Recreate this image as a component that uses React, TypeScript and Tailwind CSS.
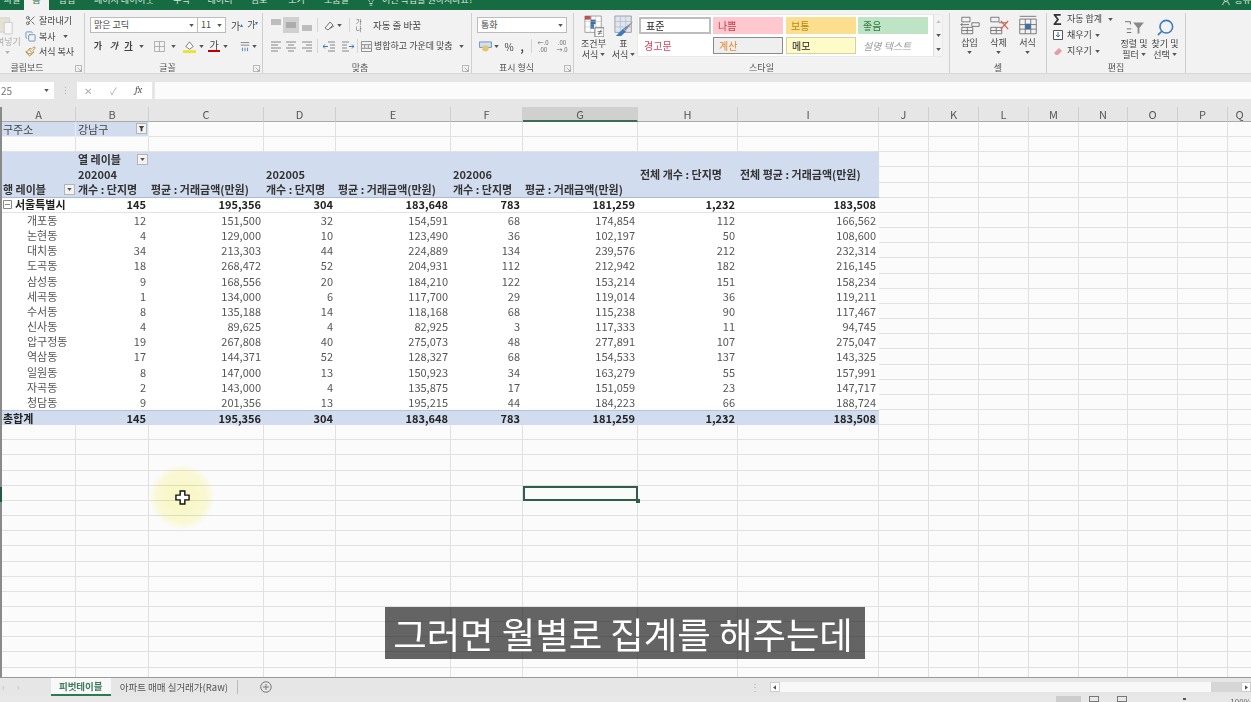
import type { ReactNode } from 'react';
import { Scissors, Copy, Paintbrush, Search, Lightbulb, UserRound } from 'lucide-react';

const COLUMNS = ['A', 'B', 'C', 'D', 'E', 'F', 'G', 'H', 'I', 'J', 'K', 'L', 'M', 'N', 'O', 'P', 'Q'];
const GRID = 'grid grid-rows-[15.17px] grid-cols-[74px_73px_115px_72px_115px_72px_115px_100px_141px_50px_50px_50px_50px_49px_50px_50px_24px]';
const FONT = 'font-["Noto_Sans_CJK_KR","Noto_Sans",sans-serif]';

const DONGS = [
  ['개포동', '12', '151,500', '32', '154,591', '68', '174,854', '112', '166,562'],
  ['논현동', '4', '129,000', '10', '123,490', '36', '102,197', '50', '108,600'],
  ['대치동', '34', '213,303', '44', '224,889', '134', '239,576', '212', '232,314'],
  ['도곡동', '18', '268,472', '52', '204,931', '112', '212,942', '182', '216,145'],
  ['삼성동', '9', '168,556', '20', '184,210', '122', '153,214', '151', '158,234'],
  ['세곡동', '1', '134,000', '6', '117,700', '29', '119,014', '36', '119,211'],
  ['수서동', '8', '135,188', '14', '118,168', '68', '115,238', '90', '117,467'],
  ['신사동', '4', '89,625', '4', '82,925', '3', '117,333', '11', '94,745'],
  ['압구정동', '19', '267,808', '40', '275,073', '48', '277,891', '107', '275,047'],
  ['역삼동', '17', '144,371', '52', '128,327', '68', '154,533', '137', '143,325'],
  ['일원동', '8', '147,000', '13', '150,923', '34', '163,279', '55', '157,991'],
  ['자곡동', '2', '143,000', '4', '135,875', '17', '151,059', '23', '147,717'],
  ['청담동', '9', '201,356', '13', '195,215', '44', '184,223', '66', '188,724'],
];
const SEOUL = ['서울특별시', '145', '195,356', '304', '183,648', '783', '181,259', '1,232', '183,508'];
const TOTAL = ['총합계', '145', '195,356', '304', '183,648', '783', '181,259', '1,232', '183,508'];
const YEARS = ['', '202004', '', '202005', '', '202006', '', '전체 개수 : 단지명', '전체 평균 : 거래금액(만원)'];
const HEADS = ['행 레이블', '개수 : 단지명', '평균 : 거래금액(만원)', '개수 : 단지명', '평균 : 거래금액(만원)', '개수 : 단지명', '평균 : 거래금액(만원)', '', ''];
const TABS: [string, string][] = [
  ['파일', 'w-[24px]'],
  ['삽입', 'w-[36px] ml-[25px]'],
  ['페이지 레이아웃', 'w-[78px]'],
  ['수식', 'w-[37px]'],
  ['데이터', 'w-[40px]'],
  ['검토', 'w-[38px]'],
  ['보기', 'w-[37px]'],
  ['도움말', 'w-[43px]'],
];

function Chev({ className = '' }: { className?: string }) {
  return (
    <svg viewBox="0 0 6 4" className={`w-[5px] h-[3px] shrink-0 ${className}`}>
      <path d="M0 0h6L3 4z" fill="#555" />
    </svg>
  );
}

function Lines({ kind }: { kind: 'left' | 'center' | 'right' }) {
  const x = kind === 'left' ? [1, 8] : kind === 'center' ? [3, 9] : [5, 11];
  return (
    <svg viewBox="0 0 12 12" className="w-[12px] h-[12px]">
      <path d={`M1 2h10M${x[0]} 5h${x[1] - x[0]}M1 8h10M${x[0]} 11h${x[1] - x[0]}`} stroke="#888" strokeWidth="1" />
    </svg>
  );
}

function VLines({ at }: { at: 'top' | 'mid' | 'bottom' }) {
  const y = at === 'top' ? 1 : at === 'mid' ? 4 : 7;
  return (
    <svg viewBox="0 0 12 12" className="w-[12px] h-[12px]">
      <path d={`M1 ${y}h10M1 ${y + 2}h10M1 ${y + 4}h10`} stroke="#888" strokeWidth="1" />
    </svg>
  );
}

function Group({ w, label, launcher, labelClass = '', children }: { w: string; label: string; launcher?: boolean; labelClass?: string; children: ReactNode }) {
  return (
    <div className={`${w} shrink-0 h-full flex flex-col border-r border-[#cfcfcf] relative`}>
      <div className="flex-1 min-h-0">{children}</div>
      <div className={`h-[11px] flex items-center justify-center text-[9px] text-[#555] ${labelClass}`}>{label}</div>
      {launcher && (
        <svg viewBox="0 0 8 8" className="absolute right-[2px] bottom-[1px] w-[7px] h-[7px]">
          <path d="M.5.5h7v7h-7zM3 3l4 4M5 7h2V5" fill="none" stroke="#999" strokeWidth=".8" />
        </svg>
      )}
    </div>
  );
}

function BigLabel({ lines, chev }: { lines: string[]; chev?: boolean }) {
  return (
    <div className="flex flex-col items-center text-[9px] leading-[11px] text-[#444] mt-[1px]">
      {lines.map((l, i) => (
        <span key={l} className="flex items-center gap-[2px] whitespace-nowrap">
          {l}
          {chev && i === lines.length - 1 && <Chev />}
        </span>
      ))}
    </div>
  );
}

function StyleCell({ className, children }: { className: string; children: string }) {
  return <div className={`h-[17px] flex items-center pl-[5px] text-[10px] ${className}`}>{children}</div>;
}

function Ribbon() {
  return (
    <div className="h-[64px] bg-[#f2f2f2] flex pt-[3px] text-[#444] border-b border-[#d8d8d8] shrink-0">
      <Group w="w-[85px]" label="클립보드" launcher labelClass="pr-[30px]">
        <div className="flex">
          <div className="w-[26px] flex flex-col items-start opacity-40">
            <svg viewBox="0 0 18 22" className="w-[16px] h-[22px] -ml-[2px] mt-[1px]">
              <path d="M1 3h12v16H1z" fill="#d8c8a8" stroke="#999" />
              <path d="M7 8h9v13H7z" fill="#fff" stroke="#888" />
            </svg>
            <span className="text-[9px] leading-[11px] -ml-[4px] whitespace-nowrap">여넣기</span>
            <Chev className="ml-[5px] mt-[4px]" />
          </div>
          <div className="flex flex-col text-[9px] leading-[15.5px] whitespace-nowrap -ml-px">
            <span className="flex items-center gap-[3px] h-[15.5px]"><Scissors size={11} color="#666" />잘라내기</span>
            <span className="flex items-center gap-[3px] h-[15.5px]"><Copy size={11} color="#6a8fc0" />복사<Chev className="ml-[4px]" /></span>
            <span className="flex items-center gap-[3px] h-[15.5px]"><Paintbrush size={11} color="#b08a3c" />서식 복사</span>
          </div>
        </div>
      </Group>
      <Group w="w-[178px]" label="글꼴" launcher labelClass="pr-[12px]">
        <div className="pl-[5px] pt-[4px]">
          <div className="flex items-center h-[16px]">
            <div className="w-[108px] h-[16px] bg-white border border-[#bcbcbc] flex items-center justify-between px-[3px] text-[9px]">맑은 고딕<Chev /></div>
            <div className="w-[28px] h-[16px] bg-white border border-l-0 border-[#bcbcbc] flex items-center justify-between px-[3px] text-[9px]">11<Chev /></div>
            <span className="ml-[5px] text-[10px]">가<sup className="text-[6px] text-[#3a7abf]">▴</sup></span>
            <span className="ml-[4px] text-[9px]">가<sup className="text-[6px] text-[#3a7abf]">▾</sup></span>
          </div>
          <div className="flex items-center h-[16px] mt-[5px] text-[9px] font-bold">
            <span className="w-[16px] text-center">가</span>
            <span className="w-[16px] text-center italic">가</span>
            <span className="w-[13px] text-center underline">가</span>
            <Chev className="ml-[4px]" />
            <svg viewBox="0 0 12 12" className="ml-[10px] w-[11px] h-[11px]">
              <path d="M.5.5h11v11H.5zM6 .5v11M.5 6h11" fill="none" stroke="#aaa" />
            </svg>
            <Chev className="ml-[6px]" />
            <svg viewBox="0 0 14 14" className="ml-[7px] w-[13px] h-[13px]">
              <path d="M3 7l4-5 4 5-4 3z" fill="#fff" stroke="#777" />
              <path d="M0 11h14v3H0z" fill="#e9e32a" />
            </svg>
            <Chev className="ml-[3px]" />
            <span className="ml-[4px] w-[12px] flex flex-col items-center leading-[9px] text-[10px] font-normal">가<span className="block w-[12px] h-[2px] bg-[#c00000] mt-[1px]" /></span>
            <Chev className="ml-[3px]" />
            <svg viewBox="0 0 14 14" className="ml-[11px] w-[12px] h-[12px]">
              <path d="M2 3h10M2 6h10" stroke="#777" />
              <path d="M4 9v4M7 9v4M10 9v4" stroke="#3a7abf" />
            </svg>
            <Chev className="ml-[1px]" />
          </div>
        </div>
      </Group>
      <Group w="w-[209px]" label="맞춤" launcher labelClass="pr-[14px]">
        <div className="pl-[5px] pt-[4px]">
          <div className="flex items-center h-[16px]">
            <span className="w-[15px] flex justify-center"><VLines at="top" /></span>
            <span className="w-[16px] h-[16px] flex justify-center items-center bg-[#d0d0d0]"><VLines at="mid" /></span>
            <span className="w-[15px] flex justify-center"><VLines at="bottom" /></span>
            <span className="w-px h-[14px] bg-[#d5d5d5] ml-[3px]" />
            <svg viewBox="0 0 12 12" className="ml-[5px] w-[12px] h-[12px]">
              <path d="M2 9l5-6 3 3-5 5zM6 10l5-3" fill="none" stroke="#777" />
            </svg>
            <Chev className="ml-[2px]" />
            <span className="w-px h-[14px] bg-[#d5d5d5] ml-[7px]" />
            <span className="ml-[6px] text-[6px] leading-[7px] w-[10px] text-[#555]">가<br />나</span>
            <span className="ml-[7px] text-[9.500px] whitespace-nowrap">자동 줄 바꿈</span>
          </div>
          <div className="flex items-center h-[16px] mt-[5px]">
            <span className="w-[15px] flex justify-center"><Lines kind="left" /></span>
            <span className="w-[16px] flex justify-center"><Lines kind="center" /></span>
            <span className="w-[15px] flex justify-center"><Lines kind="right" /></span>
            <span className="w-px h-[14px] bg-[#d5d5d5] ml-[3px]" />
            <svg viewBox="0 0 12 12" className="ml-[5px] w-[12px] h-[12px]">
              <path d="M5 2h7M7 5h5M7 8h5M5 11h7" stroke="#888" />
              <path d="M5 6.500H0M2 4.500L0 6.500l2 2" fill="none" stroke="#3a7abf" />
            </svg>
            <svg viewBox="0 0 12 12" className="ml-[7px] w-[12px] h-[12px]">
              <path d="M0 2h7M0 5h5M0 8h5M0 11h7" stroke="#888" />
              <path d="M7 6.500h5M10 4.500l2 2-2 2" fill="none" stroke="#3a7abf" />
            </svg>
            <span className="w-px h-[14px] bg-[#d5d5d5] ml-[3px]" />
            <svg viewBox="0 0 12 12" className="ml-[3px] w-[11px] h-[11px]">
              <path d="M.5.500h11v11H.5zM.5 4h11M.5 8h11M4 4v4M8 4v4" fill="none" stroke="#888" />
            </svg>
            <span className="ml-[2px] text-[9px] whitespace-nowrap">병합하고 가운데 맞춤</span>
            <Chev className="ml-[6px]" />
          </div>
        </div>
      </Group>
      <Group w="w-[102px]" label="표시 형식" launcher labelClass="pr-[12px]">
        <div className="pl-[5px] pt-[4px]">
          <div className="w-[90px] h-[16px] bg-white border border-[#bcbcbc] flex items-center justify-between px-[3px] text-[9px]">통화<Chev /></div>
          <div className="flex items-center h-[16px] mt-[5px] text-[10px]">
            <svg viewBox="0 0 14 12" className="ml-[2px] w-[13px] h-[11px]">
              <path d="M.5 1h13v6H.5z" fill="#cfe0ef" stroke="#6a8fc0" />
              <circle cx="7" cy="8" r="3.500" fill="#e9c46a" />
            </svg>
            <Chev className="ml-[2px]" />
            <span className="ml-[4px] w-[12px] text-center">%</span>
            <span className="ml-[4px] w-[6px] text-center font-bold">,</span>
            <span className="w-px h-[14px] bg-[#d5d5d5] ml-[6px]" />
            <span className="ml-[4px] w-[14px] text-[6px] leading-[7px] text-center text-[#666]">←.0<br />.00</span>
            <span className="ml-[5px] w-[14px] text-[6px] leading-[7px] text-center text-[#666]">.00<br />→.0</span>
          </div>
        </div>
      </Group>
      <Group w="w-[376px]" label="스타일">
        <div className="flex pt-[2px]">
          <div className="w-[33px] ml-[3px] flex flex-col items-center">
            <svg viewBox="0 0 22 24" className="w-[20px] h-[22px]">
              <path d="M1 1h18v18H1z" fill="#fff" stroke="#999" />
              <path d="M1 1h7v4H1z" fill="#c0504d" />
              <path d="M7 5h6v5H7z" fill="#3a6ea5" />
              <path d="M7 10h4v5H7z" fill="#3a6ea5" />
              <path d="M1 7h18M1 13h18M7 1v18M13 1v18" stroke="#bbb" strokeWidth=".6" />
              <path d="M12 14h10v10H12z" fill="#fff" stroke="#666" />
              <path d="M15 20h5M15 18h5M19 16l-3 6" stroke="#444" strokeWidth=".7" />
            </svg>
            <BigLabel lines={['조건부', '서식']} chev />
          </div>
          <div className="w-[27px] flex flex-col items-center">
            <svg viewBox="0 0 22 24" className="w-[20px] h-[22px]">
              <path d="M1 1h18v18H1z" fill="#dfe6f2" stroke="#999" />
              <path d="M1 7h18M1 13h18M7 1v18M13 1v18" stroke="#aab" strokeWidth=".6" />
              <path d="M21 7L13 17l-3-2z" fill="#888" />
              <path d="M10 15l3 3-5 5-6 0z" fill="#3a7abf" />
            </svg>
            <BigLabel lines={['표', '서식']} chev />
          </div>
          <div className="flex h-[41px] bg-white ml-[1px] shadow-[0_0_1px_#bbb]">
            <div className="w-[295px] grid grid-cols-[72px_74px_73px_70px] grid-rows-[17px_17px] gap-y-[3px] pl-px pt-[2px]">
              <StyleCell className="w-[72px] border-2 border-[#bdbdbd] text-[#222]">표준</StyleCell>
              <StyleCell className="w-[70px] ml-[2px] bg-[#ffc7ce] text-[#c23a4a]">나쁨</StyleCell>
              <StyleCell className="w-[70px] ml-[1px] bg-[#fcdf8e] text-[#b8860b]">보통</StyleCell>
              <StyleCell className="w-[70px] bg-[#bfe3c5] text-[#2f7a3e]">좋음</StyleCell>
              <StyleCell className="w-[70px] text-[#d6455a]">경고문</StyleCell>
              <StyleCell className="w-[70px] ml-[2px] bg-[#efefef] border border-[#8a8a8a] text-[#e08a2c]">계산</StyleCell>
              <StyleCell className="w-[70px] ml-[1px] bg-[#fffbc8] border border-[#d8cfa0] text-[#222]">메모</StyleCell>
              <StyleCell className="w-[70px] italic text-[#999]">설명 텍스트</StyleCell>
            </div>
            <div className="w-[9px] flex flex-col border-l border-[#ddd] bg-[#f4f4f4] items-center justify-around">
              <Chev className="rotate-180 opacity-30" />
              <Chev />
              <Chev />
            </div>
          </div>
        </div>
      </Group>
      <Group w="w-[97px]" label="셀">
        <div className="flex pt-[2px] pl-[5px]">
          {[
            { t: '삽입', d: 'M3 2h9v5H3zM3 13h12v7H3zM9 13v7M3 16.500h12M14 8h8v4h-8zM2 10h9M4 8l-2 2 2 2', x: '' },
            { t: '삭제', d: 'M3 2h9v5H3zM3 13h12v7H3zM9 13v7M3 16.500h12M12 8h9', x: 'M14 6l8 9M22 6l-8 9' },
            { t: '서식', d: 'M3 4h18v16H3zM9 4v16M15 4v16M3 10h18M3 15h18M3 1h18', x: '' },
          ].map((c, i) => (
            <div key={c.t} className="w-[29px] flex flex-col items-center">
              <svg viewBox="0 0 24 22" className="w-[22px] h-[21px]">
                <path d={c.d} fill="none" stroke="#666" strokeWidth=".9" />
                {c.x && <path d={c.x} fill="none" stroke="#d9604a" strokeWidth="1.400" />}
                {i === 2 && <path d="M9 9h6v6H9z" fill="#3a6ea5" />}
              </svg>
              <span className="text-[9px] leading-[11px] mt-[1px]">{c.t}</span>
              <Chev className="mt-[3px]" />
            </div>
          ))}
        </div>
      </Group>
      <Group w="w-[139px]" label="편집">
        <div className="flex pl-[6px] text-[9px] whitespace-nowrap -mt-[2px]">
          <div className="w-[64px] flex flex-col">
            <span className="flex items-center h-[16px] gap-[3px]"><span className="w-[11px] text-[14px] leading-[14px] font-bold text-[#333]">Σ</span>자동 합계<Chev className="ml-[3px]" /></span>
            <span className="flex items-center h-[16px] gap-[3px]"><svg viewBox="0 0 10 10" className="w-[10px] h-[10px]"><path d="M.5.5h9v9h-9z" fill="#fff" stroke="#555" /><path d="M5 2v5M3 5l2 2 2-2" fill="none" stroke="#3a6ea5" /></svg><span className="ml-[1px]">채우기</span><Chev /></span>
            <span className="flex items-center h-[16px] gap-[3px]"><svg viewBox="0 0 10 10" className="w-[10px] h-[10px]"><path d="M1 7l5-5 3 3-4 4H3z" fill="#e79aa8" /></svg><span className="ml-[1px]">지우기</span><Chev /></span>
          </div>
          <div className="w-[34px] flex flex-col items-center">
            <svg viewBox="0 0 22 20" className="w-[20px] h-[18px] mt-[8px]">
              <path d="M10 4h12l-5 6v6h-2v-6z" fill="#888" />
              <path d="M1 3h6v3M3 11h5M3 15h5" fill="none" stroke="#666" />
            </svg>
            <BigLabel lines={['정렬 및', '필터']} chev />
          </div>
          <div className="w-[28px] flex flex-col items-center">
            <Search size={19} color="#3a7abf" className="-scale-x-100 mt-[7px]" />
            <BigLabel lines={['찾기 및', '선택']} chev />
          </div>
        </div>
      </Group>
    </div>
  );
}

function FilterBtn({ icon }: { icon?: boolean }) {
  return (
    <span className="w-[11px] h-[11px] bg-[#f2f2f2] border border-[#b5b5b5] flex items-center justify-center shrink-0 mr-px">
      {icon ? (
        <svg viewBox="0 0 8 8" className="w-[7px] h-[7px]"><path d="M1 1h6L5 4v3H3V4z" fill="#444" /></svg>
      ) : (
        <Chev />
      )}
    </span>
  );
}

function Sheet() {
  const plain = 'border-r border-b border-[#e1e1e1]';
  const extras = (n: number) =>
    COLUMNS.slice(9).map((c) => <div key={c + n} className={plain} />);

  const blank = (n: number) => (
    <div key={n} className={GRID}>
      {COLUMNS.map((c) => (
        <div key={c} className={`${plain} relative`}>
          {n === 24 && c === 'G' && (
            <div className="absolute left-0 top-0 -right-px -bottom-px border-2 border-[#2f5f47] z-10">
              <span className="absolute -right-[4px] -bottom-[4px] w-[4px] h-[4px] bg-[#2f5f47]" />
            </div>
          )}
        </div>
      ))}
    </div>
  );

  const rowCells = (vals: string[], bold: boolean, indent: string, extra = '') =>
    vals.map((v, i) => (
      <div key={i} className={`flex items-center whitespace-nowrap pb-px ${i === 0 ? indent : 'justify-end pr-[3px]'} ${extra} ${bold ? 'font-bold text-[#222]' : 'text-[#555]'}`}>
        {v}
      </div>
    ));

  const pivotBg = 'bg-[#d2dcef]';
  const rows: ReactNode[] = [];

  rows.push(
    <div key="r1" className={GRID}>
      <div className={`${pivotBg} pl-[1px] pb-px flex items-center text-[#444] border-r border-b border-[#e8edf6]`}>구주소</div>
      <div className={`${pivotBg} pl-[2px] pb-px flex items-center justify-between text-[#444] border-r border-b border-[#e8edf6]`}>강남구<FilterBtn icon /></div>
      {COLUMNS.slice(2).map((c) => <div key={c} className={plain} />)}
    </div>,
  );
  rows.push(blank(1));
  rows.push(
    <div key="r3" className={GRID}>
      <div className={pivotBg} />
      <div className={`${pivotBg} pl-[2px] pb-px flex items-center justify-between font-bold text-[#333]`}>열 레이블<FilterBtn /></div>
      <div className={`${pivotBg} col-span-7`} />
      {extras(3)}
    </div>,
  );
  rows.push(
    <div key="r4" className={GRID}>
      {YEARS.map((v, i) => (
        <div key={i} className={`${pivotBg} pl-[2px] pb-[3px] flex items-center font-bold text-[#333] whitespace-nowrap`}>{v}</div>
      ))}
      {extras(4)}
    </div>,
  );
  rows.push(
    <div key="r5" className={GRID}>
      {HEADS.map((v, i) => (
        <div key={i} className={`${pivotBg} ${i === 0 ? 'pl-[1px]' : 'pl-[2px]'} pb-px flex items-center justify-between font-bold text-[#333] whitespace-nowrap border-b border-[#a9bbdc]`}>
          {v}
          {i === 0 && <FilterBtn />}
        </div>
      ))}
      {extras(5)}
    </div>,
  );
  rows.push(
    <div key="r6" className={GRID}>
      {SEOUL.map((v, i) => (
        <div key={i} className={`flex items-center whitespace-nowrap font-bold text-[#222] pb-px bg-white border-b border-[#dfe3ea] ${i === 0 ? 'pl-[1px] gap-[3px]' : 'justify-end pr-[3px]'}`}>
          {i === 0 && (
            <svg viewBox="0 0 9 9" className="w-[9px] h-[9px] shrink-0"><path d="M.5.500h8v8h-8zM2 4.500h5" fill="#fff" stroke="#888" /></svg>
          )}
          {v}
        </div>
      ))}
      {extras(6)}
    </div>,
  );
  DONGS.forEach((d) => {
    rows.push(
      <div key={d[0]} className={GRID}>
        {rowCells(d, false, 'pl-[25px]', 'bg-white')}
        {extras(100)}
      </div>,
    );
  });
  rows.push(
    <div key="tot" className={GRID}>
      {rowCells(TOTAL, true, 'pl-[1px]', `${pivotBg} border-t border-[#b4c4e0]`)}
      {extras(20)}
    </div>,
  );
  for (let n = 20; n < 37; n++) rows.push(blank(n));

  return (
    <div className="flex-1 min-h-0 overflow-hidden bg-[#fbfbfb] border-l-2 border-l-[#8a8a8a] text-[11px] leading-[14px] border-b border-b-[#9a9a9a]">
      <div className="h-[15px] overflow-hidden bg-[#e6e6e6] text-[#555]">
        <div className={`${GRID} grid-rows-[15px]`}>
          {COLUMNS.map((c) => (
            <div key={c} className={`h-[15px] flex items-center justify-center border-r border-[#cfcfcf] ${c === 'G' ? 'bg-[#d0d0d0] border-b-2 border-b-[#3f6b55]' : 'border-b border-b-[#ababab]'}`}>{c}</div>
          ))}
        </div>
      </div>
      {rows}
    </div>
  );
}

export default function App() {
  return (
    <div className={`relative w-[1251px] h-[702px] overflow-hidden bg-[#e6e6e6] ${FONT}`}>
      <div className="w-full h-full flex flex-col blur-[0.35px]">
        {/* title / tabs, top of it is cropped in the video */}
        <div className="h-[10px] bg-[#176b43] flex items-start overflow-hidden text-[9px] text-[#d8e8df] shrink-0">
          {TABS.map(([t, w]) => (
            <span key={t} className={`${w} shrink-0 text-center leading-[12px] -mt-[6px] whitespace-nowrap`}>{t}</span>
          ))}
          <Lightbulb size={10} className="ml-[8px] -mt-[4px]" />
          <span className="ml-[6px] leading-[12px] -mt-[6px] whitespace-nowrap">어떤 작업을 원하시나요?</span>
          <span className="ml-auto flex items-center gap-[3px] leading-[12px] -mt-[6px] whitespace-nowrap">
            <UserRound size={10} className="mt-[2px]" />공유
          </span>
        </div>
        <div className="absolute left-[24px] top-0 w-[25px] h-[10px] bg-[#f2f2f2] text-[9px] text-[#1f6b43] text-center leading-[12px] overflow-hidden">
          <span className="block -mt-[6px]">홈</span>
        </div>

        <Ribbon />

        <div className="h-[33px] shrink-0 flex items-center gap-[3px]">
          <div className="w-[54px] h-[17px] bg-white flex items-center justify-between pr-[5px] text-[10px] text-[#777] pl-[1px]">25<Chev /></div>
          <div className="w-[17px] text-center text-[#aaa] text-[9px]">⋮</div>
          <div className="w-[75px] h-[17px] bg-white flex items-center pl-[7px] text-[10px] text-[#aaa]">
            <span className="w-[26px]">✕</span><span className="w-[25px]">✓</span><span className="italic font-serif text-[#555]">fx</span>
          </div>
          <div className="flex-1 h-[17px] bg-[#fbfbfb]" />
        </div>

        <Sheet />

        <div className="h-[18px] shrink-0 flex items-center text-[9.500px] text-[#555]">
          <span className="w-[51px] pl-[2px] text-[#bbb] tracking-[12px]">‹›</span>
          <div className="w-[61px] h-full bg-[#f8f8f8] border-b-2 border-[#2c7a50] flex items-center justify-center font-bold text-[#3f7a5c] whitespace-nowrap">피벗테이블</div>
          <div className="w-[128px] h-[14px] flex items-center justify-center border-r border-[#bbb] whitespace-nowrap">아파트 매매 실거래가(Raw)</div>
          <svg viewBox="0 0 12 12" className="ml-[22px] w-[12px] h-[12px]">
            <circle cx="6" cy="6" r="5.300" fill="none" stroke="#777" />
            <path d="M3 6h6M6 3v6" stroke="#777" />
          </svg>
          <span className="ml-[478px] text-[#aaa]">⋮</span>
          <div className="ml-[10px] w-[486px] h-[10px] flex">
            <span className="w-[10px] bg-white border border-[#ccc] flex items-center justify-center"><Chev className="rotate-90" /></span>
            <span className="flex-1 bg-[#f8f8f8]" />
            <span className="w-[30px] bg-[#d6d6d6]" />
            <span className="w-[10px] bg-white border border-[#ccc] flex items-center justify-center"><Chev className="-rotate-90" /></span>
          </div>
        </div>

        <div className="h-[6px] shrink-0 flex items-start overflow-hidden text-[8px] text-[#666] bg-[#e8e8e8]">
          <span className="ml-[1056px] w-[27px] h-full bg-[#cdcdcd]" />
          <span className="ml-[8px] w-[10px] h-full border border-[#777]" />
          <span className="ml-[18px] w-[10px] h-full border border-[#777]" />
          <span className="ml-[56px] w-[4px] h-[2px] mt-[2px] bg-[#555]" />
          <span className="ml-[44px] leading-[12px]">100%</span>
        </div>

        {/* active row mark on the cropped row header */}
        <span className="absolute left-0 top-[487px] w-[2px] h-[15px] bg-[#1f5c3f]" />

        {/* click highlight + excel cross cursor from the recording */}
        <div className="absolute left-[150px] top-[465px] w-[64px] h-[64px] rounded-full bg-[radial-gradient(circle,#fcfbc0_0%,#fdfcd8_55%,transparent_74%)] mix-blend-multiply" />
        <svg viewBox="0 0 16 16" className="absolute left-[175px] top-[490px] w-[15px] h-[15px]">
          <path d="M5.500 1h5v4.500H15v5h-4.500V15h-5v-4.500H1v-5h4.500z" fill="#fff" stroke="#111" strokeWidth="1.500" />
        </svg>
      </div>

      {/* burned-in subtitle */}
      <div className="absolute left-[385px] top-[607px] w-[480px] h-[52px] bg-black/60 flex items-center justify-center pr-[4px] text-[36.400px] text-white whitespace-nowrap">
        그러면 월별로 집계를 해주는데
      </div>
    </div>
  );
}
